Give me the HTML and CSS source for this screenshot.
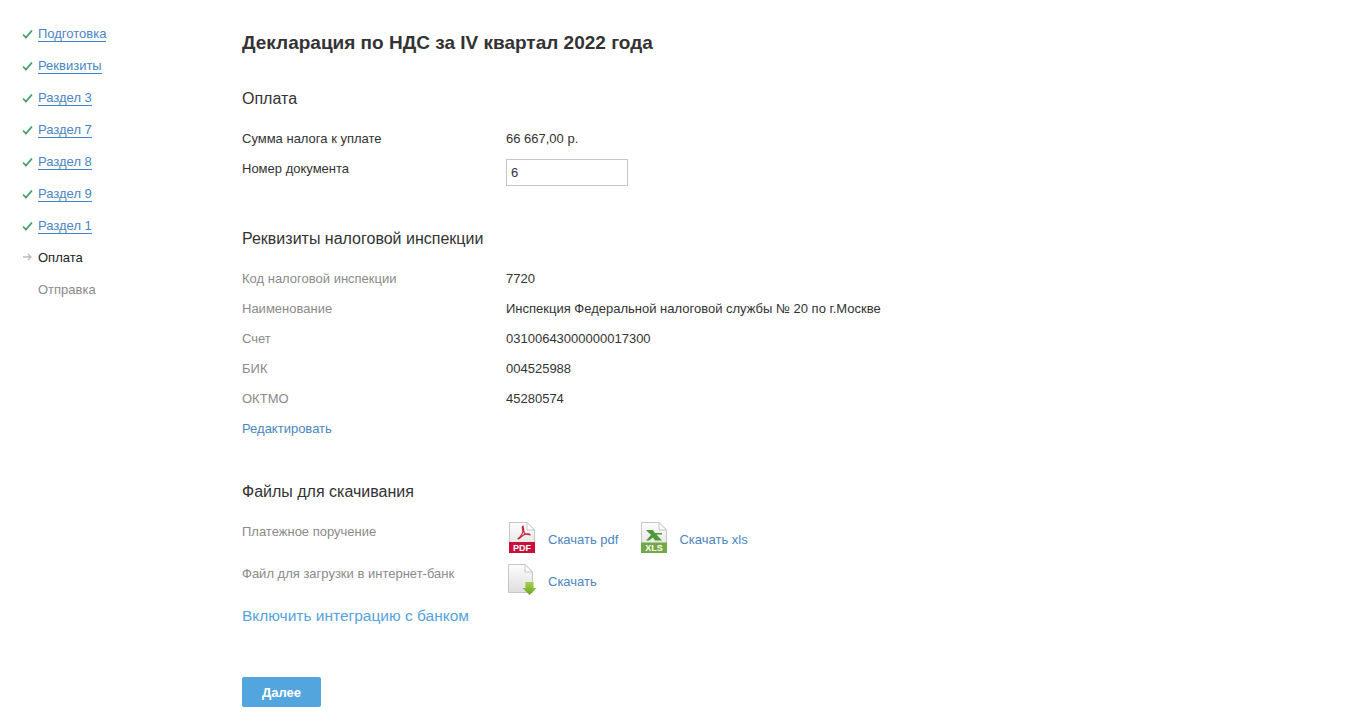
FILE: index.html
```html
<!DOCTYPE html>
<html lang="ru">
<head>
    <meta charset="UTF-8">
    <title>Декларация по НДС</title>
    <link rel="stylesheet" href="styles.css">
</head>
<body>
    <div class="page">
        <ul class="steps">
            <li class="step"><svg class="step-icon" viewBox="0 0 11 10"><path d="M1 5.5L4 8.5L10 1.5" fill="none" stroke="#3f9c63" stroke-width="1.7"/></svg><a href="#" class="step-link">Подготовка</a></li>
            <li class="step"><svg class="step-icon" viewBox="0 0 11 10"><path d="M1 5.5L4 8.5L10 1.5" fill="none" stroke="#3f9c63" stroke-width="1.7"/></svg><a href="#" class="step-link">Реквизиты</a></li>
            <li class="step"><svg class="step-icon" viewBox="0 0 11 10"><path d="M1 5.5L4 8.5L10 1.5" fill="none" stroke="#3f9c63" stroke-width="1.7"/></svg><a href="#" class="step-link">Раздел 3</a></li>
            <li class="step"><svg class="step-icon" viewBox="0 0 11 10"><path d="M1 5.5L4 8.5L10 1.5" fill="none" stroke="#3f9c63" stroke-width="1.7"/></svg><a href="#" class="step-link">Раздел 7</a></li>
            <li class="step"><svg class="step-icon" viewBox="0 0 11 10"><path d="M1 5.5L4 8.5L10 1.5" fill="none" stroke="#3f9c63" stroke-width="1.7"/></svg><a href="#" class="step-link">Раздел 8</a></li>
            <li class="step"><svg class="step-icon" viewBox="0 0 11 10"><path d="M1 5.5L4 8.5L10 1.5" fill="none" stroke="#3f9c63" stroke-width="1.7"/></svg><a href="#" class="step-link">Раздел 9</a></li>
            <li class="step"><svg class="step-icon" viewBox="0 0 11 10"><path d="M1 5.5L4 8.5L10 1.5" fill="none" stroke="#3f9c63" stroke-width="1.7"/></svg><a href="#" class="step-link">Раздел 1</a></li>
            <li class="step step-current"><svg class="step-icon" viewBox="0 0 11 10"><path d="M1 5H9M6 2L9 5L6 8" fill="none" stroke="#bbb" stroke-width="1.3"/></svg>Оплата</li>
            <li class="step step-todo"><span class="step-icon"></span>Отправка</li>
        </ul>

        <div class="main">
            <h1 class="title">Декларация по НДС за IV квартал 2022 года</h1>

            <h2 class="section-title section-payment">Оплата</h2>
            <div class="row row-first">
                <div class="label label-dark">Сумма налога к уплате</div>
                <div class="value">66 667,00 р.</div>
            </div>
            <div class="row row-input">
                <div class="label label-dark">Номер документа</div>
                <input class="input" type="text" value="6">
            </div>

            <h2 class="section-title">Реквизиты налоговой инспекции</h2>
            <div class="row row-first">
                <div class="label">Код налоговой инспекции</div>
                <div class="value">7720</div>
            </div>
            <div class="row">
                <div class="label">Наименование</div>
                <div class="value">Инспекция Федеральной налоговой службы № 20 по г.Москве</div>
            </div>
            <div class="row">
                <div class="label">Счет</div>
                <div class="value">03100643000000017300</div>
            </div>
            <div class="row">
                <div class="label">БИК</div>
                <div class="value">004525988</div>
            </div>
            <div class="row">
                <div class="label">ОКТМО</div>
                <div class="value">45280574</div>
            </div>
            <div class="row"><a href="#" class="link">Редактировать</a></div>

            <h2 class="section-title section-files">Файлы для скачивания</h2>
            <div class="file-row file-row-first">
                <div class="label">Платежное поручение</div>
                <div class="files">
                    <a href="#" class="link file">
                        <svg class="file-icon" viewBox="0 0 32 36">
                            <defs>
                                <linearGradient id="page-pdf" x1="0" y1="0" x2="0" y2="1"><stop offset="0" stop-color="#fdfdfd"/><stop offset="1" stop-color="#dedede"/></linearGradient>
                            </defs>
                            <path d="M3.500 1.500H21L28.500 9V31.500H3.500Z" fill="url(#page-pdf)" stroke="#c6c6c6"/>
                            <path d="M21 1.500V9H28.500Z" fill="#fff" stroke="#c6c6c6"/>
                            <path d="M17 5C16 5.500 16.500 9 17 10.500C16 13.500 14 16.500 12 17.500C12.500 19 15.500 15 18.500 13.500C20 13 23 13.500 24 14C24.500 12.500 20.500 12.500 18.500 12.500C17.500 10.500 17.500 6 17 5Z" fill="none" stroke="#c8203c" stroke-width="1.1"/>
                            <rect x="3" y="21" width="26" height="11" fill="#c8103a"/>
                            <text x="16" y="29.700" class="file-badge">PDF</text>
                        </svg>
                        <span>Скачать pdf</span>
                    </a>
                    <a href="#" class="link file file-xls">
                        <svg class="file-icon" viewBox="0 0 32 36">
                            <defs>
                                <linearGradient id="page-xls" x1="0" y1="0" x2="0" y2="1"><stop offset="0" stop-color="#fdfdfd"/><stop offset="1" stop-color="#dedede"/></linearGradient>
                            </defs>
                            <path d="M3.500 1.500H21L28.500 9V31.500H3.500Z" fill="url(#page-xls)" stroke="#c6c6c6"/>
                            <path d="M21 1.500V9H28.500Z" fill="#fff" stroke="#c6c6c6"/>
                            <path d="M8 9H15L17 12H24V13.500H18.500L24 19.500H17L15 16.500L11 19.500H8L13 14Z" fill="#4f9a36"/>
                            <rect x="3" y="21.500" width="26" height="10.500" fill="#72a845"/>
                            <text x="16" y="29.700" class="file-badge">XLS</text>
                        </svg>
                        <span>Скачать xls</span>
                    </a>
                </div>
            </div>
            <div class="file-row">
                <div class="label">Файл для загрузки в интернет-банк</div>
                <div class="files">
                    <a href="#" class="link file">
                        <svg class="file-icon" viewBox="0 0 32 36">
                            <defs>
                                <linearGradient id="page-dl" x1="0" y1="0" x2="0" y2="1"><stop offset="0" stop-color="#fdfdfd"/><stop offset="1" stop-color="#dedede"/></linearGradient>
                                <linearGradient id="arrow-dl" x1="0" y1="0" x2="0" y2="1"><stop offset="0" stop-color="#a5d04a"/><stop offset="1" stop-color="#6aa51f"/></linearGradient>
                            </defs>
                            <path d="M2.500 1.500H19L26.500 9V29.500H2.500Z" fill="url(#page-dl)" stroke="#c6c6c6"/>
                            <path d="M19 1.500V9H26.500Z" fill="#fff" stroke="#c6c6c6"/>
                            <path d="M19.500 19H27.500V25H30.500L23.500 32L16.500 25H19.500Z" fill="url(#arrow-dl)"/>
                        </svg>
                        <span>Скачать</span>
                    </a>
                </div>
            </div>
            <a href="#" class="bank-link">Включить интеграцию с банком</a>
            <button class="button" type="button">Далее</button>
        </div>
    </div>
</body>
</html>
```

FILE: styles.css
```css
* {
    box-sizing: border-box;
}

body {
    margin: 0;
    background-color: #fff;
    color: #333;
    font-family: "Liberation Sans", Arial, sans-serif;
    font-size: 13px;
}

.page {
    display: flex;
    height: 721px;
    overflow: hidden;
}

.steps {
    width: 242px;
    flex-shrink: 0;
    margin: 0;
    padding: 18px 0 0 22px;
    list-style: none;
}

.step {
    display: flex;
    align-items: center;
    height: 32px;
    color: #222;
}

.step-icon {
    width: 11px;
    height: 10px;
    margin-right: 5px;
    flex-shrink: 0;
}

.step-link {
    color: #4a86c0;
    text-decoration: none;
    border-bottom: 1px solid #3a86c8;
    line-height: 15px;
}

.step-current,
.step-todo {
    padding-bottom: 2px;
}

.step-todo {
    color: #8a8a8a;
}

.title {
    margin: 32px 0 0;
    font-size: 19px;
    line-height: 22px;
    font-weight: bold;
    color: #333;
}

.section-title {
    margin: 34px 0 0;
    font-size: 16px;
    line-height: 20px;
    font-weight: normal;
    color: #333;
}

.section-payment {
    margin-top: 35px;
}

.section-files {
    margin-top: 39px;
}

.row {
    display: flex;
    height: 30px;
    align-items: center;
}

.row-first {
    margin-top: 14px;
}

.row-input {
    align-items: flex-start;
    height: 36px;
    margin-top: 6px;
}

.row-input .label {
    line-height: 20px;
}

.label {
    width: 264px;
    flex-shrink: 0;
    color: #8a8a8a;
}

.label-dark {
    color: #333;
}

.input {
    width: 122px;
    height: 27px;
    padding: 0 4px;
    border: 1px solid #c6c6c6;
    font: inherit;
    color: #333;
    outline: none;
}

.link {
    color: #4a86c0;
    text-decoration: none;
}

.file-row {
    display: flex;
    height: 42px;
}

.file-row-first {
    margin-top: 18px;
}

.file-row .label {
    padding-top: 4px;
}

.files {
    display: flex;
    padding-top: 1px;
}

.file {
    display: flex;
    align-items: center;
    height: 36px;
}

.file-xls {
    margin-left: 20px;
}

.file-xls .file-icon {
    margin-right: 9px;
}

.file-icon {
    width: 32px;
    height: 36px;
    margin-right: 10px;
}

.file-badge {
    font-size: 9px;
    font-weight: bold;
    fill: #fff;
    text-anchor: middle;
}

.bank-link {
    display: block;
    margin-top: 2px;
    font-size: 15.5px;
    line-height: 20px;
    color: #55a3dc;
    text-decoration: none;
}

.button {
    display: block;
    width: 79px;
    height: 30px;
    margin-top: 51px;
    border: none;
    border-radius: 2px;
    background-color: #52a5dd;
    color: #fff;
    font-family: inherit;
    font-size: 13px;
    font-weight: bold;
}
```
